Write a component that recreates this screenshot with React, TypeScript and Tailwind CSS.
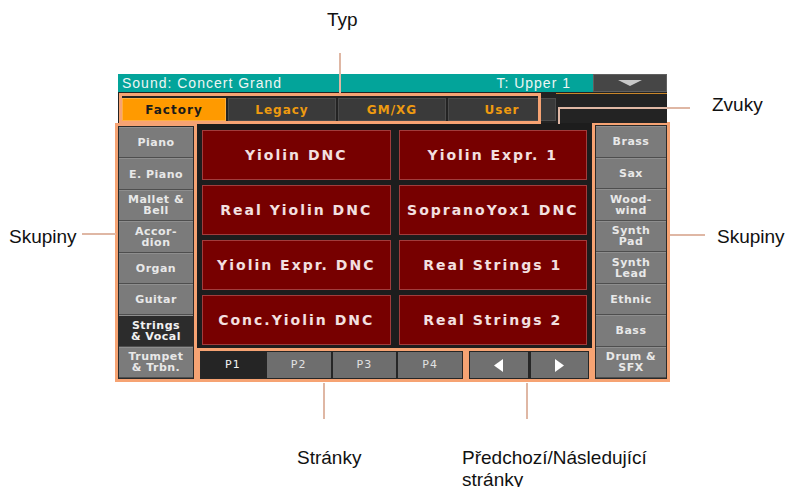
const leftGroups = [
  ["Piano"],
  ["E. Piano"],
  ["Mallet &", "Bell"],
  ["Accor-", "dion"],
  ["Organ"],
  ["Guitar"],
  ["Strings", "& Vocal"],
  ["Trumpet", "& Trbn."],
];

const rightGroups = [
  ["Brass"],
  ["Sax"],
  ["Wood-", "wind"],
  ["Synth", "Pad"],
  ["Synth", "Lead"],
  ["Ethnic"],
  ["Bass"],
  ["Drum &", "SFX"],
];

const sounds = [
  "Yiolin DNC",
  "Yiolin Expr. 1",
  "Real Yiolin DNC",
  "SopranoYox1 DNC",
  "Yiolin Expr. DNC",
  "Real Strings 1",
  "Conc.Yiolin DNC",
  "Real Strings 2",
];

const tabs = [
  { label: "Factory", w: "w-[104px]" },
  { label: "Legacy", w: "w-[108px]" },
  { label: "GM/XG", w: "w-[108px]" },
  { label: "User", w: "w-[108px]" },
];

const GroupColumn = ({
  items,
  selected,
  className,
}: {
  items: string[][];
  selected?: number;
  className: string;
}) => (
  <div className={`flex flex-col border-[3px] border-[#f6a373] bg-[#2a2a2a] p-[1px] ${className}`}>
    {items.map((lines, i) => (
      <div
        key={i}
        className={`flex flex-1 flex-col items-center justify-center border-t border-b border-t-[#8e8e8e] border-b-[#4e4e4e] text-[11px] leading-[11px] font-bold tracking-[0.5px] ${
          i === selected ? "bg-[#2c2c2c] text-[#f2f2f2]" : "bg-[#7b7b7b] text-[#e8e8e8]"
        }`}
      >
        {lines.map((l) => (
          <span key={l}>{l}</span>
        ))}
      </div>
    ))}
  </div>
);

const App = () => {
  return (
    <div className="relative w-[789px] h-[487px] overflow-hidden bg-white">
      {/* screen */}
      <div className="ml-[115px] w-[555px] pt-[74px] font-['DejaVu_Sans',sans-serif]">
        <div className="mx-[3px] flex h-[18px]">
          <div className="flex flex-1 items-center justify-between bg-[#03a49a] pl-[4px] pr-[22px] font-['Liberation_Sans',Arial,sans-serif] text-[14px] tracking-[1px] text-[#eef6f4]">
            <span>Sound: Concert Grand</span>
            <span>T: Upper 1</span>
          </div>
          <div className="flex w-[74px] items-center justify-center border border-[#606060] bg-[#464646]">
            <svg width="24" height="6" viewBox="0 0 24 6">
              <polygon points="0,0 24,0 12,6" fill="#c9c9c9" />
            </svg>
          </div>
        </div>

        <div className="relative mx-[3px] flex h-[31px] bg-[#232323] pl-[4px] pt-[6px]">
          <div className="flex h-[23px] gap-[2px]">
            {tabs.map((t, i) => (
              <div
                key={t.label}
                className={`${t.w} flex items-center justify-center border text-[12px] font-bold tracking-[1px] ${
                  i === 0
                    ? "border-[#ffb040] bg-[#ff9a00] text-[#1a1a1a]"
                    : "border-[#4c4c4c] bg-[#3a3a3a] text-[#ee9a10]"
                }`}
              >
                {t.label}
              </div>
            ))}
          </div>
          <div className="ml-auto mt-[-5px] h-[1px] w-[120px] bg-[#c8862a]" />
          <div className="absolute left-[1px] top-[1px] h-[31px] w-[422px] border-[3px] border-[#f6a373]" />
        </div>

        <div className="flex h-[259px]">
          <GroupColumn items={leftGroups} selected={6} className="w-[82px]" />

          <div className="flex w-[395px] flex-col bg-[#1d1d1d]">
            <div className="grid flex-1 grid-cols-2 grid-rows-4 gap-x-[8px] gap-y-[5px] px-[5px] pt-[7px] pb-[3px]">
              {sounds.map((s) => (
                <div
                  key={s}
                  className="flex items-center justify-center border border-[#a23c3c] bg-[#770000] text-[14px] font-bold tracking-[2px] text-[#f3e0e0]"
                >
                  {s}
                </div>
              ))}
            </div>
            <div className="flex h-[34px]">
              <div className="flex w-[269px] gap-[2px] border-[3px] border-[#f6a373] bg-[#262626] p-[1px]">
                {["P1", "P2", "P3", "P4"].map((p, i) => (
                  <div
                    key={p}
                    className={`flex flex-1 items-center justify-center text-[11px] tracking-[1px] ${
                      i === 0 ? "bg-[#252525] text-[#f4f4f4]" : "bg-[#6e6e6e] text-[#e2e2e2]"
                    }`}
                  >
                    {p}
                  </div>
                ))}
              </div>
              <div className="flex w-[126px] gap-[3px] border-[3px] border-[#f6a373] bg-[#262626] p-[1px]">
                <div className="flex flex-1 items-center justify-center bg-[#707070]">
                  <svg width="9" height="13" viewBox="0 0 9 13">
                    <polygon points="9,0 9,13 0,6.5" fill="#ffffff" />
                  </svg>
                </div>
                <div className="flex flex-1 items-center justify-center bg-[#707070]">
                  <svg width="9" height="13" viewBox="0 0 9 13">
                    <polygon points="0,0 9,6.5 0,13" fill="#ffffff" />
                  </svg>
                </div>
              </div>
            </div>
          </div>

          <GroupColumn items={rightGroups} className="w-[78px] mt-[-1px]" />
        </div>
      </div>

      {/* callouts */}
      <div className="font-['Liberation_Sans',Arial,sans-serif] text-[19px] leading-[22px] text-[#111]">
        <span className="absolute left-[327px] top-[9px]">Typ</span>
        <div className="absolute left-[339px] top-[53px] h-[40px] w-[2px] bg-[#dfb7a4]" />

        <span className="absolute left-[712px] top-[94px]">Zvuky</span>
        <div className="absolute left-[558px] top-[107px] h-[2px] w-[132px] bg-[#dfb7a4]" />
        <div className="absolute left-[558px] top-[107px] h-[17px] w-[2px] bg-[#dfb7a4]" />

        <span className="absolute left-[9px] top-[226px]">Skupiny</span>
        <div className="absolute left-[82px] top-[233px] h-[2px] w-[34px] bg-[#dfb7a4]" />

        <span className="absolute left-[717px] top-[226px]">Skupiny</span>
        <div className="absolute left-[670px] top-[234px] h-[2px] w-[35px] bg-[#dfb7a4]" />

        <span className="absolute left-[297px] top-[447px]">Stránky</span>
        <div className="absolute left-[323px] top-[383px] h-[36px] w-[2px] bg-[#dfb7a4]" />

        <span className="absolute left-[462px] top-[447px]">
          Předchozí/Následující
          <br />
          stránky
        </span>
        <div className="absolute left-[526px] top-[383px] h-[36px] w-[2px] bg-[#dfb7a4]" />
      </div>
    </div>
  );
};

export default App;
